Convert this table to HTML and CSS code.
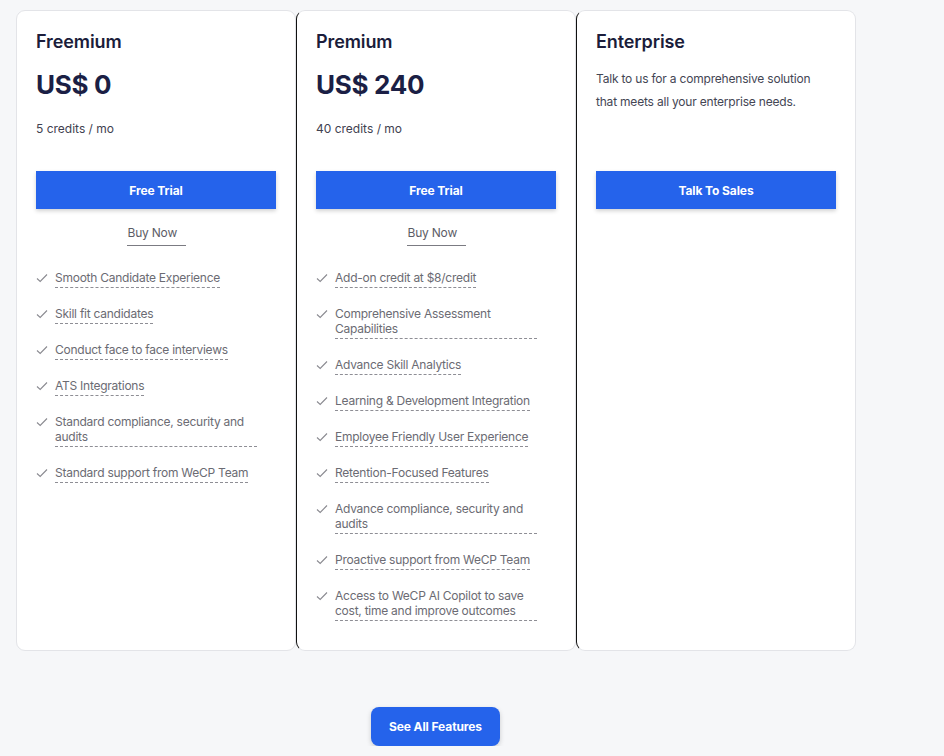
FILE: index.html
```html
<!DOCTYPE html>
<html lang="en">
<head>
<meta charset="utf-8">
<title>Pricing</title>
<link rel="stylesheet" href="styles.css">
</head>
<body>
<main class="page">
  <section class="plans">
    <article class="card">
      <div class="card-top">
        <h3 class="plan-name">Freemium</h3>
        <div class="price">US$ 0</div>
        <div class="credits">5 credits / mo</div>
      </div>
      <a class="btn-primary">Free Trial</a>
      <div class="buy-wrap"><a class="buy">Buy Now</a></div>
      <ul class="features">
        <li><svg class="check" viewBox="0 0 12 10"><path d="M1 5.5 L4.2 8.5 L11 1.5"/></svg><span>Smooth Candidate Experience</span></li>
        <li><svg class="check" viewBox="0 0 12 10"><path d="M1 5.5 L4.2 8.5 L11 1.5"/></svg><span>Skill fit candidates</span></li>
        <li><svg class="check" viewBox="0 0 12 10"><path d="M1 5.5 L4.2 8.5 L11 1.5"/></svg><span>Conduct face to face interviews</span></li>
        <li><svg class="check" viewBox="0 0 12 10"><path d="M1 5.5 L4.2 8.5 L11 1.5"/></svg><span>ATS Integrations</span></li>
        <li><svg class="check" viewBox="0 0 12 10"><path d="M1 5.5 L4.2 8.5 L11 1.5"/></svg><span class="wide">Standard compliance, security and audits</span></li>
        <li><svg class="check" viewBox="0 0 12 10"><path d="M1 5.5 L4.2 8.5 L11 1.5"/></svg><span>Standard support from WeCP Team</span></li>
      </ul>
    </article>
    <article class="card card-dark-left">
      <div class="card-top">
        <h3 class="plan-name">Premium</h3>
        <div class="price">US$ 240</div>
        <div class="credits">40 credits / mo</div>
      </div>
      <a class="btn-primary">Free Trial</a>
      <div class="buy-wrap"><a class="buy">Buy Now</a></div>
      <ul class="features">
        <li><svg class="check" viewBox="0 0 12 10"><path d="M1 5.5 L4.2 8.5 L11 1.5"/></svg><span>Add-on credit at $8/credit</span></li>
        <li><svg class="check" viewBox="0 0 12 10"><path d="M1 5.5 L4.2 8.5 L11 1.5"/></svg><span class="wide">Comprehensive Assessment Capabilities</span></li>
        <li><svg class="check" viewBox="0 0 12 10"><path d="M1 5.5 L4.2 8.5 L11 1.5"/></svg><span>Advance Skill Analytics</span></li>
        <li><svg class="check" viewBox="0 0 12 10"><path d="M1 5.5 L4.2 8.5 L11 1.5"/></svg><span>Learning &amp; Development Integration</span></li>
        <li><svg class="check" viewBox="0 0 12 10"><path d="M1 5.5 L4.2 8.5 L11 1.5"/></svg><span>Employee Friendly User Experience</span></li>
        <li><svg class="check" viewBox="0 0 12 10"><path d="M1 5.5 L4.2 8.5 L11 1.5"/></svg><span>Retention-Focused Features</span></li>
        <li><svg class="check" viewBox="0 0 12 10"><path d="M1 5.5 L4.2 8.5 L11 1.5"/></svg><span class="wide">Advance compliance, security and audits</span></li>
        <li><svg class="check" viewBox="0 0 12 10"><path d="M1 5.5 L4.2 8.5 L11 1.5"/></svg><span>Proactive support from WeCP Team</span></li>
        <li><svg class="check" viewBox="0 0 12 10"><path d="M1 5.5 L4.2 8.5 L11 1.5"/></svg><span class="wide">Access to WeCP AI Copilot to save cost, time and improve outcomes</span></li>
      </ul>
    </article>
    <article class="card card-dark-left">
      <div class="card-top">
        <h3 class="plan-name">Enterprise</h3>
        <p class="desc">Talk to us for a comprehensive solution that meets all your enterprise needs.</p>
      </div>
      <a class="btn-primary">Talk To Sales</a>
    </article>
  </section>
  <div class="more">
    <a class="btn-more">See All Features</a>
  </div>
</main>
</body>
</html>
```

FILE: styles.css
```css
* { box-sizing: border-box; }

html, body {
  margin: 0;
  padding: 0;
  background: #f6f7f9;
  font-family: Inter, "Noto Sans", Arial, sans-serif;
}

.page {
  padding: 10px 0 0 16px;
  width: 856px;
}

.plans {
  display: grid;
  grid-template-columns: repeat(3, 280px);
}

.card {
  background: #ffffff;
  border: 1px solid #e3e4e8;
  border-radius: 9px;
  padding: 19px 19px 29px 19px;
  display: flex;
  flex-direction: column;
}

.card-dark-left {
  border-left: 1px solid #111111;
}

.card-top {
  height: 141px;
}

.plan-name {
  margin: 0;
  font-size: 18px;
  line-height: 24px;
  font-weight: 600;
  color: #1b1d3b;
  letter-spacing: -0.1px;
}

.price {
  margin-top: 15px;
  font-size: 26px;
  line-height: 32px;
  font-weight: 700;
  color: #1b1f45;
  letter-spacing: -0.3px;
}

.credits {
  margin-top: 20px;
  font-size: 12px;
  line-height: 16px;
  color: #3f4150;
}

.desc {
  margin: 13px 0 0;
  max-width: 222px;
  font-size: 12px;
  line-height: 23px;
  color: #444654;
  letter-spacing: -0.2px;
}

.btn-primary {
  display: flex;
  align-items: center;
  justify-content: center;
  height: 38px;
  background: #2563eb;
  color: #ffffff;
  font-size: 12px;
  font-weight: 700;
  letter-spacing: -0.1px;
  box-shadow: 0 2px 4px rgba(0, 0, 0, 0.18);
}

.buy-wrap {
  display: flex;
  justify-content: center;
  margin-top: 16px;
}

.buy {
  display: block;
  width: 59px;
  padding-left: 1px;
  font-size: 12px;
  line-height: 16px;
  padding-bottom: 4px;
  color: #5c5c66;
  letter-spacing: -0.2px;
  border-bottom: 1.5px solid #7b7b82;
}

.features {
  list-style: none;
  margin: 24px 0 0;
  padding: 0;
  display: flex;
  flex-direction: column;
  gap: 18px;
}

.features li {
  display: flex;
  align-items: flex-start;
  gap: 7px;
}

.check {
  width: 12px;
  height: 10px;
  margin-top: 3px;
  flex: none;
  fill: none;
  stroke: #8a8a90;
  stroke-width: 1.1;
}

.features span {
  display: inline-block;
  max-width: 202px;
  font-size: 12px;
  line-height: 15px;
  padding-bottom: 2px;
  color: #6b6b73;
  letter-spacing: -0.25px;
  border-bottom: 1px dashed #8e8e95;
}

.features span.wide {
  width: 202px;
}

.more {
  display: flex;
  justify-content: center;
  margin-top: 56px;
  padding-right: 1px;
}

.btn-more {
  display: flex;
  align-items: center;
  justify-content: center;
  width: 129px;
  height: 39px;
  border-radius: 8px;
  background: #2563eb;
  color: #ffffff;
  font-size: 12px;
  font-weight: 700;
  letter-spacing: -0.1px;
  box-shadow: 0 2px 5px rgba(0, 0, 0, 0.18);
}
```
